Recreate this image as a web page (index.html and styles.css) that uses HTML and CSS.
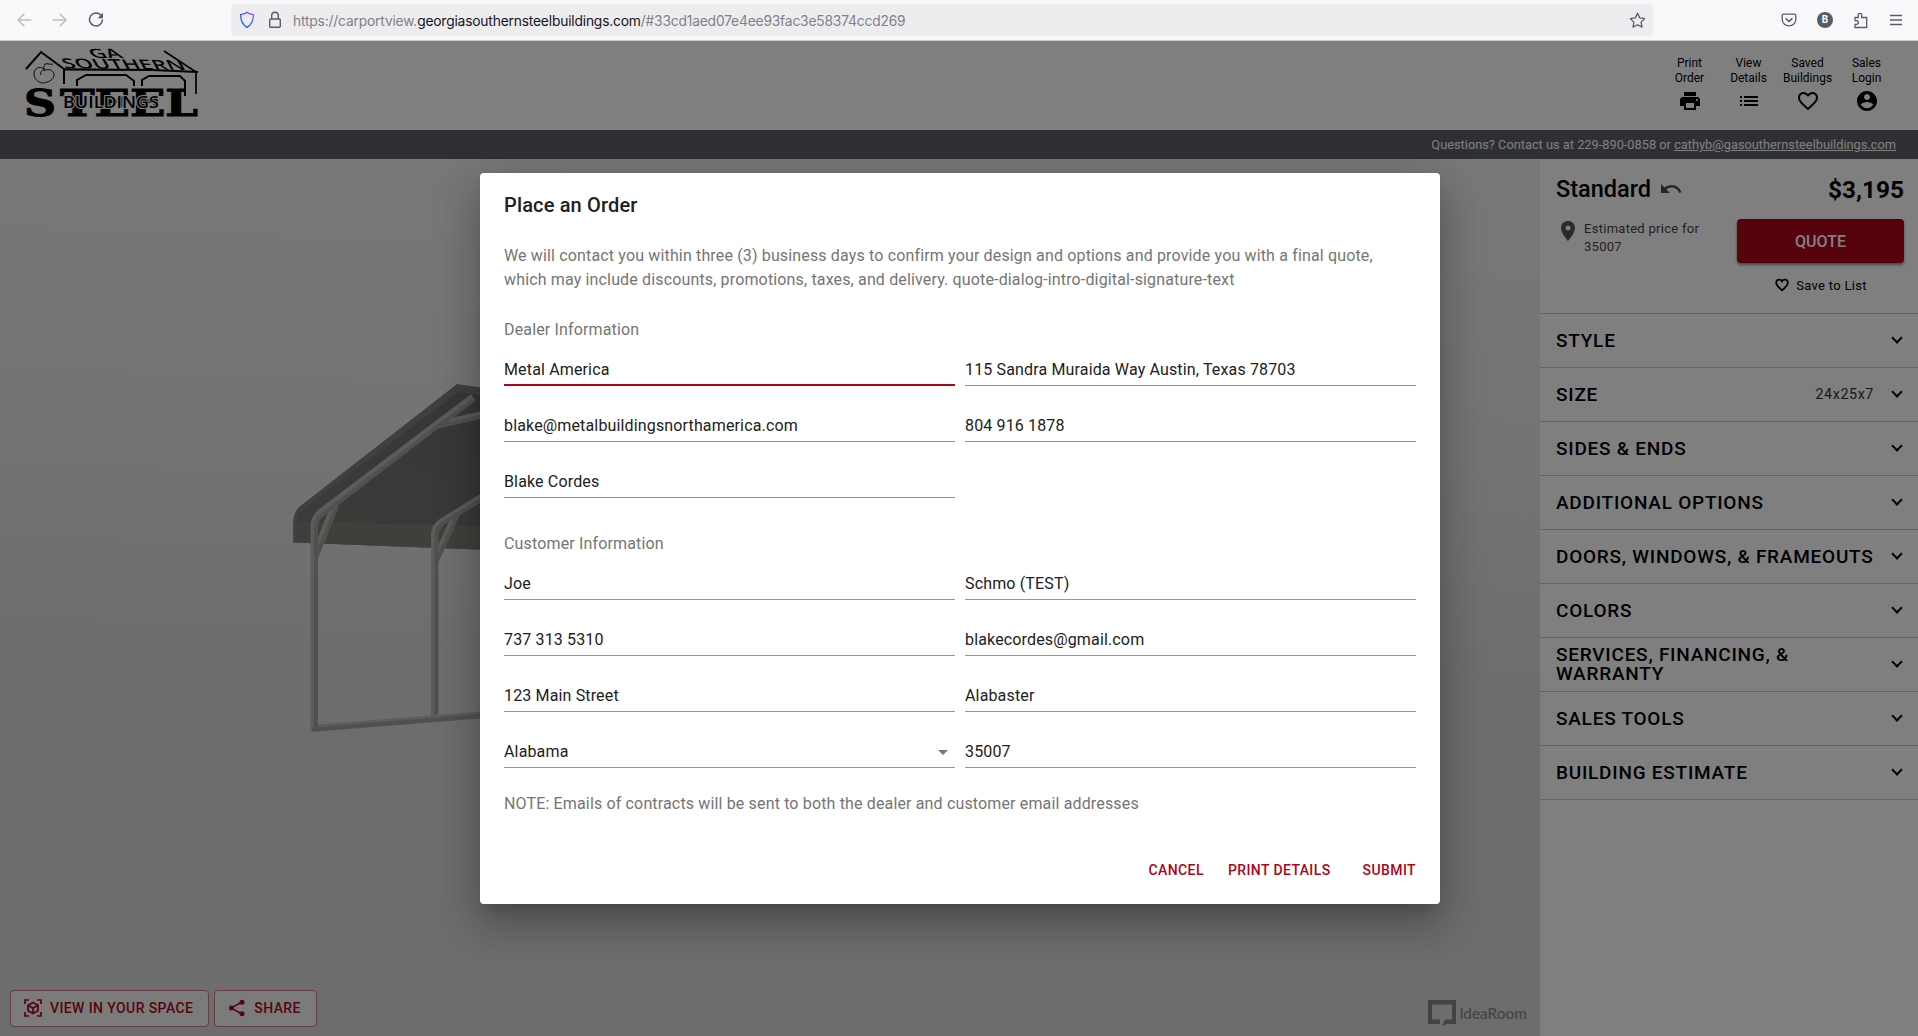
FILE: index.html
```html
<!DOCTYPE html>
<html lang="en">
<head>
<meta charset="utf-8">
<title>Georgia Southern Steel Buildings</title>
<link rel="stylesheet" href="styles.css">
</head>
<body>
<div class="window">
  <div class="chrome">
    <div class="nav">
      <svg class="nav-off" width="16" height="16" viewBox="0 0 16 16"><path d="M15 8H2M8 2L2 8l6 6"/></svg>
      <svg class="nav-off" width="16" height="16" viewBox="0 0 16 16"><path d="M1 8h13M8 2l6 6-6 6"/></svg>
      <svg class="nav-on" width="16" height="16" viewBox="0 0 16 16"><path d="M12.900 3.200A6.500 6.500 0 1 0 14.500 8"/><path class="fill" d="M15 .8v5.400H9.600z"/></svg>
    </div>
    <div class="url">
      <svg class="shield" width="16" height="18" viewBox="0 0 16 18"><defs><linearGradient id="sg" x1="0" y1="1" x2="1" y2="0"><stop offset="0" stop-color="#0060df"/><stop offset="1" stop-color="#9059ff"/></linearGradient></defs><path d="M8 1.400c2 1.400 4 2 6.400 2.200 0 6-1.400 9.900-6.400 12.800C3 13.500 1.600 9.600 1.600 3.600 4 3.400 6 2.800 8 1.400z" fill="none" stroke="url(#sg)" stroke-width="1.300"/></svg>
      <svg class="lock" width="14" height="18" viewBox="0 0 14 18"><rect x="1.700" y="8" width="10.600" height="8.300" rx="1"/><path d="M3.700 8V4.500a3.300 3.300 0 0 1 6.600 0V8"/></svg>
      <div class="address">https://carportview.<b>georgiasouthernsteelbuildings.com</b>/#33cd1aed07e4ee93fac3e58374ccd269</div>
      <svg class="star" width="17" height="17" viewBox="0 0 17 17"><path d="M8.500 1.300l2.200 4.600 5 .7-3.600 3.500.9 5-4.500-2.400L4 15.100l.9-5L1.300 6.600l5-.7z"/></svg>
    </div>
    <div class="tools">
      <svg width="16" height="16" viewBox="0 0 16 16"><path d="M2.600 2.200h10.800q1.400 0 1.400 1.400V7.500a6.800 6.300 0 0 1-13.600 0V3.600q0-1.400 1.400-1.400z"/><path d="M4.600 6.300L8 9.500l3.400-3.200" stroke-width="1.600"/></svg>
      <span class="avatar">B</span>
      <svg width="16" height="17" viewBox="0 0 16 17"><path d="M2 5.500h3.200V3a1.700 1.700 0 0 1 3.400 0v2.500h5.100v10H2v-3.200h1.600a1.800 1.800 0 0 0 0-3.600H2z"/></svg>
      <svg width="14" height="14" viewBox="0 0 14 14"><path d="M1 2.500h12M1 7h12M1 11.500h12"/></svg>
    </div>
  </div>

  <div class="app">
    <header class="header">
      <svg class="logo" width="182" height="80" viewBox="0 0 182 80">
        <g fill="none" stroke="#000" stroke-width="2">
          <path d="M4 27L19 10l23 17v15"/>
          <path d="M41 27.300l89 .700 46 2" stroke-width="2.200"/>
          <path d="M142 9l32 21v22" stroke-width="1.700"/>
          <path d="M55 44v-6l9-5h40l8 6v5M120 44v-6l7-4h31l5 5v15"/>
          <path d="M22 27c-5-4-10 0-10 5 0 5 4 8 8 9 6 0 13-4 12-9-1-4-6-6-10-3M19 33c-1-3 1-5 4-6-2-2-1-3 0-5 3-1 5 1 8 0" stroke-width=".9"/>
        </g>
        <text class="logo-roof" transform="translate(71 15.500) skewX(38) scale(1 .8)" textLength="31" lengthAdjust="spacingAndGlyphs">GA</text>
        <text class="logo-roof" transform="translate(43 26) rotate(1) skewX(30) scale(1 .84)" textLength="122" lengthAdjust="spacingAndGlyphs">SOUTHERN</text>
        <g class="logo-slab" stroke="#000" stroke-width="1">
          <text x="2" y="73.500" textLength="32" lengthAdjust="spacingAndGlyphs">S</text>
          <text x="38" y="73.500" textLength="138" lengthAdjust="spacingAndGlyphs">TEEL</text>
        </g>
        <text class="logo-mid" x="41" y="66" textLength="96" lengthAdjust="spacingAndGlyphs">BUILDINGS</text>
      </svg>
      <nav class="actions">
        <a>Print<br>Order<svg viewBox="0 0 24 24"><path d="M19 8H5c-1.660 0-3 1.340-3 3v6h4v4h12v-4h4v-6c0-1.660-1.340-3-3-3zm-3 11H8v-5h8v5zm3-7c-.55 0-1-.45-1-1s.45-1 1-1 1 .45 1 1-.45 1-1 1zm-1-9H6v4h12V3z"/></svg></a>
        <a>View<br>Details<svg viewBox="0 0 24 24"><path d="M3 13h2v-2H3v2zm0 4h2v-2H3v2zm0-8h2V7H3v2zm4 4h14v-2H7v2zm0 4h14v-2H7v2zM7 7v2h14V7H7z"/></svg></a>
        <a>Saved<br>Buildings<svg viewBox="0 0 24 24"><path d="M16.500 3c-1.740 0-3.410.81-4.500 2.090C10.910 3.810 9.240 3 7.500 3 4.420 3 2 5.420 2 8.500c0 3.780 3.400 6.860 8.550 11.540L12 21.350l1.450-1.320C18.600 15.360 22 12.280 22 8.500 22 5.420 19.580 3 16.500 3zm-4.400 15.550l-.1.100-.1-.1C7.140 14.240 4 11.390 4 8.500 4 6.500 5.500 5 7.500 5c1.540 0 3.040.99 3.570 2.360h1.870C13.460 5.990 14.960 5 16.500 5c2 0 3.500 1.500 3.500 3.500 0 2.890-3.140 5.740-7.900 10.050z"/></svg></a>
        <a>Sales<br>Login<svg viewBox="0 0 24 24"><path d="M12 2C6.480 2 2 6.480 2 12s4.480 10 10 10 10-4.480 10-10S17.520 2 12 2zm0 3c1.660 0 3 1.340 3 3s-1.340 3-3 3-3-1.340-3-3 1.340-3 3-3zm0 14.200c-2.500 0-4.710-1.280-6-3.220.03-1.990 4-3.080 6-3.080 1.990 0 5.970 1.090 6 3.080-1.290 1.940-3.500 3.220-6 3.220z"/></svg></a>
      </nav>
    </header>
    <div class="contact">Questions? Contact us at 229-890-0858 or&nbsp;<u>cathyb@gasouthernsteelbuildings.com</u></div>

    <div class="main">
      <section class="scene">
        <svg class="carport" width="240" height="380" viewBox="0 0 240 380">
          <defs><linearGradient id="roof" x1="0" y1="1" x2="1" y2="0"><stop offset="0" stop-color="#767a74"/><stop offset="1" stop-color="#6a6e69"/></linearGradient></defs>
          <path d="M13.300 172.500V151q1-9 6-14L177 14.300l63 9V181z" fill="#7f837d"/>
          <path d="M16 172V152q2-9 8-14L178 22l62 9v126L16 152z" fill="url(#roof)"/>
          <path d="M16 153l224 12v16L13.300 172.500z" fill="#7d8079"/>
          <path d="M13.300 172V151q1-9 6-14L177 14.300l63 9v7L178 22 24 138q-6 5-7 13l-1 21z" fill="#7e837d"/>
          <g fill="none" stroke="#b9b8b4" stroke-width="7">
            <path d="M34 361V157q0-9 7-15L156 55l37-28"/>
            <path d="M34 187l21-53M154.500 346V164q0-7 7-12l78-48M155 191l22-49M240 36l-84 19M32 358.500l208-16.500"/>
          </g>
          <g fill="none" stroke="#a3a19d" stroke-width="4">
            <path d="M36 357V158q0-8 6-13L157 57l37-27M36 188l21-52M156.500 344V165q0-7 7-12l76-47M157 191l22-49M32 359.500l208-16.500M240 38l-80 18"/>
          </g>
        </svg>
        <div class="scene-buttons">
          <button><svg width="18" height="18" viewBox="0 0 18 18" fill="none" stroke="currentColor" stroke-width="1.700"><path d="M1 5V1h4M13 1h4v4M17 13v4h-4M5 17H1v-4M9 3.500l5 2.800v5.500l-5 2.800-5-2.800V6.300zM4 6.300l5 2.900 5-2.900M9 9.200v5.400"/></svg>VIEW IN YOUR SPACE</button>
          <button><svg width="18" height="18" viewBox="0 0 18 18"><path d="M14 3L3 9l11 6" fill="none" stroke="currentColor" stroke-width="1.500"/><circle cx="14" cy="3.200" r="2.500"/><circle cx="3.500" cy="9" r="2.500"/><circle cx="14" cy="14.800" r="2.500"/></svg>SHARE</button>
        </div>
        <div class="idearoom"><svg width="28" height="26" viewBox="0 0 28 26"><path d="M0 0h28v24h-9l-5.500 2 4-6.500H24v-15H4v15h8v4.500H0z"/></svg>IdeaRoom</div>
      </section>

      <aside class="sidebar">
        <div class="summary">
          <div class="title-row"><span>Standard</span><svg width="24" height="24" viewBox="0 0 24 24"><path d="M12.500 8c-2.650 0-5.050.99-6.900 2.600L2 7v9h9l-3.620-3.620c1.390-1.160 3.160-1.880 5.120-1.880 3.540 0 6.550 2.310 7.600 5.500l2.370-.78C21.080 11.030 17.150 8 12.500 8z"/></svg><strong>$3,195</strong></div>
          <div class="quote-row">
            <svg class="pin" width="24" height="24" viewBox="0 0 24 24"><path d="M12 2C8.130 2 5 5.130 5 9c0 5.250 7 13 7 13s7-7.750 7-13c0-3.870-3.130-7-7-7zm0 9.500c-1.380 0-2.500-1.120-2.500-2.500s1.120-2.500 2.500-2.500 2.500 1.120 2.500 2.500-1.120 2.500-2.500 2.500z"/></svg>
            <p class="estimate">Estimated price for<br>35007</p>
            <div class="quote-col"><button class="quote">QUOTE</button>
              <div class="save"><svg width="16" height="16" viewBox="0 0 24 24"><path d="M12 20C5 14 3.300 11.500 3.300 8.500a4.600 4.600 0 0 1 8.700-2 4.600 4.600 0 0 1 8.700 2c0 3-1.700 5.500-8.700 11.500z" fill="none" stroke="#000" stroke-width="2.700"/></svg>Save to List</div></div>
          </div>
        </div>
        <div class="row"><span>STYLE</span><i></i></div>
        <div class="row"><span>SIZE</span><em>24x25x7</em><i></i></div>
        <div class="row"><span>SIDES &amp; ENDS</span><i></i></div>
        <div class="row"><span>ADDITIONAL OPTIONS</span><i></i></div>
        <div class="row"><span>DOORS, WINDOWS, &amp; FRAMEOUTS</span><i></i></div>
        <div class="row"><span>COLORS</span><i></i></div>
        <div class="row"><span>SERVICES, FINANCING, &amp;<br>WARRANTY</span><i></i></div>
        <div class="row"><span>SALES TOOLS</span><i></i></div>
        <div class="row"><span>BUILDING ESTIMATE</span><i></i></div>
      </aside>
    </div>

    <div class="backdrop">
      <div class="dialog">
        <h2>Place an Order</h2>
        <p class="intro">We will contact you within three (3) business days to confirm your design and options and provide you with a final quote,<br>which may include discounts, promotions, taxes, and delivery. quote-dialog-intro-digital-signature-text</p>
        <p class="group">Dealer Information</p>
        <div class="fields">
          <div class="field focus">Metal America</div><div class="field">115 Sandra Muraida Way Austin, Texas 78703</div>
          <div class="field">blake@metalbuildingsnorthamerica.com</div><div class="field">804 916 1878</div>
          <div class="field">Blake Cordes</div>
        </div>
        <p class="group second">Customer Information</p>
        <div class="fields">
          <div class="field">Joe</div><div class="field">Schmo (TEST)</div>
          <div class="field">737 313 5310</div><div class="field">blakecordes@gmail.com</div>
          <div class="field">123 Main Street</div><div class="field">Alabaster</div>
          <div class="field select">Alabama<svg width="24" height="24" viewBox="0 0 24 24"><path d="M7 10l5 5 5-5z"/></svg></div><div class="field">35007</div>
        </div>
        <p class="note">NOTE: Emails of contracts will be sent to both the dealer and customer email addresses</p>
        <div class="dialog-actions"><a>CANCEL</a><a>PRINT DETAILS</a><a>SUBMIT</a></div>
      </div>
    </div>
  </div>
</div>
</body>
</html>
```
FILE: styles.css
```css
* { box-sizing: border-box; }
body { margin: 0; font-family: Roboto, sans-serif; overflow: hidden; }
svg { flex: none; }
p, h2 { margin: 0; }
button { font-family: inherit; }
.window { display: flex; flex-direction: column; width: 1918px; height: 1036px; }

/* Browser toolbar */
.chrome { display: flex; align-items: center; height: 41px; background: #f9f9fb; border-bottom: 1px solid #cccccf; }
.nav { display: flex; gap: 20px; padding-left: 16px; width: 231px; }
.nav svg { fill: none; stroke-width: 1.5; stroke-linecap: round; stroke-linejoin: round; }
.nav .nav-off { stroke: #bebec1; }
.nav .nav-on { stroke: #5b5b66; }
.nav-on .fill { fill: #5b5b66; stroke: none; }
.url { display: flex; align-items: center; width: 1422px; height: 32px; padding: 0 7px 0 8px; border-radius: 4px; background: #ededf0; }
.lock { margin-left: 13px; fill: none; stroke: #5b5b66; stroke-width: 1.4; }
.address { margin: 1px 0 0 11px; flex: 1; font: 13.8px Inter, sans-serif; letter-spacing: -.18px; color: #808087; white-space: nowrap; }
.address b { font-weight: 400; color: #15141a; }
.star { fill: none; stroke: #5b5b66; stroke-width: 1.3; stroke-linejoin: round; }
.tools { display: flex; align-items: center; gap: 20px; margin-left: auto; padding-right: 15px; }
.tools svg { fill: none; stroke: #5b5b66; stroke-width: 1.3; }
.avatar { width: 16px; height: 16px; border-radius: 50%; background: #5b5b66; color: #fff; font: 700 10px/16px Roboto, sans-serif; text-align: center; }

/* Page header */
.app { position: relative; display: flex; flex-direction: column; flex: 1; min-height: 0; background: #fff; }
.header { display: flex; justify-content: space-between; height: 89px; padding: 1px 22px 0; }
.logo { overflow: visible; }
.logo-roof { font-family: "Open Sans", sans-serif; font-size: 16px; font-weight: 600; }
.logo-slab { font-family: "DejaVu Serif", serif; font-size: 37px; font-weight: 700; }
.logo-mid { font-family: "Open Sans", sans-serif; font-size: 16px; font-weight: 600; fill: #000; stroke: #fff; stroke-width: 2px; paint-order: stroke; }
.actions { display: flex; padding-top: 14px; }
.actions a { display: flex; flex-direction: column; align-items: center; width: 59px; font-size: 12px; line-height: 15px; text-align: center; }
.actions svg { width: 24px; height: 24px; margin-top: 3px; }
.contact { display: flex; align-items: center; justify-content: flex-end; height: 29px; padding-right: 22px; background: #5e6068; color: #fff; font-size: 12.8px; letter-spacing: 0; }

/* Building preview */
.main { display: flex; flex: 1; min-height: 0; }
.scene { position: relative; flex: 1; background: linear-gradient(178deg, #dadada 0%, #dadada 45%, #dedede 48%, #ededed 60%, #f1f1f1 100%); background: linear-gradient(182deg, #f1f1f1 0%, #e8e8e8 33%, #dedede 52%, #dadada 58%, #dadada 100%); }
.carport { position: absolute; left: 280px; top: 211px; }
.scene-buttons { position: absolute; left: 10px; bottom: 9px; display: flex; gap: 5px; }
.scene-buttons button { display: flex; align-items: center; gap: 8px; height: 37px; padding: 0 15px 1px 13px; border: 1px solid #d5757e; border-radius: 4px; background: #f7f7f7; color: #ab0a1a; font-size: 14px; font-weight: 500; letter-spacing: .4px; }
.scene-buttons svg { fill: currentColor; }
.scene-buttons button:first-child svg { fill: none; }
.idearoom { position: absolute; right: 13px; bottom: 10px; display: flex; align-items: center; gap: 3px; font: 600 15.3px Lato, sans-serif; color: #8c8e92; }
.idearoom svg { fill: #85878a; }

/* Options sidebar */
.sidebar { width: 378px; background: #fff; }
.summary { height: 155px; padding: 15px 14px 0 16px; border-bottom: 1px solid #c7c7c7; }
.title-row { display: flex; align-items: center; height: 30px; font-size: 23.5px; font-weight: 500; }
.title-row svg { margin-left: 8px; fill: #4d4d4d; }
.title-row strong { margin-left: auto; font-weight: 700; font-size: 24.4px; }
.quote-row { display: flex; margin-top: 15px; }
.pin { fill: #555; }
.estimate { margin-left: 4px; padding-top: 1px; font-size: 13px; line-height: 18px; letter-spacing: .28px; color: #444; }
.quote-col { width: 167px; margin-left: auto; }
.quote { display: block; width: 100%; height: 44px; border: 0; border-radius: 4px; background: #ab0519; color: #fff; font-size: 16px; font-weight: 500; box-shadow: 0 2px 3px rgba(0,0,0,.45); }
.save { display: flex; align-items: center; justify-content: center; gap: 6px; margin-top: 14px; font-size: 13px; letter-spacing: .3px; }
.row { display: flex; align-items: center; height: 54px; padding: 0 14px 1px 16px; border-bottom: 1px solid #c7c7c7; font-size: 19px; font-weight: 500; line-height: 19px; letter-spacing: .76px; }
.row span { flex: 1; white-space: nowrap; }
.row em { margin-right: 19px; font-size: 14.3px; font-style: normal; font-weight: 400; letter-spacing: .6px; color: #333; }
.row i { width: 8px; height: 8px; margin: -4px 3px 0 0; border: solid #000; border-width: 0 2px 2px 0; transform: rotate(45deg); }

/* Order dialog */
.backdrop { position: absolute; inset: 0; display: flex; justify-content: center; align-items: flex-start; padding: 132px 0 0 2px; background: rgba(0,0,0,.5); }
.dialog { display: flex; flex-direction: column; width: 960px; height: 731px; padding: 0 24px; border-radius: 4px; background: #fff; color: #212121; font-size: 16px; line-height: 24px; letter-spacing: .15px; box-shadow: 0 11px 15px -7px rgba(0,0,0,.2), 0 24px 38px 3px rgba(0,0,0,.14), 0 9px 46px 8px rgba(0,0,0,.12); }
.dialog h2 { margin-top: 16px; font-size: 20px; font-weight: 500; line-height: 32px; letter-spacing: .15px; }
.intro, .group, .note { color: #757575; white-space: nowrap; }
.intro { margin-top: 23px; }
.group { margin-top: 26px; }
.group.second { margin-top: 34px; }
.fields { display: grid; grid-template-columns: 451px 451px; column-gap: 10px; row-gap: 24px; margin-top: 12px; }
.field { display: flex; align-items: center; height: 32px; padding-top: 1px; border-bottom: 1px solid #949494; white-space: nowrap; }
.field.focus { padding-top: 2px; border-bottom: 2px solid #ab0519; }
.select { justify-content: space-between; }
.select svg { fill: #757575; }
.note { margin-top: 24px; }
.dialog-actions { display: flex; justify-content: flex-end; margin-top: 42px; color: #ab0519; font-size: 14px; font-weight: 500; letter-spacing: .4px; }
.dialog-actions a:nth-child(2) { margin: 0 32px 0 24px; }
```
